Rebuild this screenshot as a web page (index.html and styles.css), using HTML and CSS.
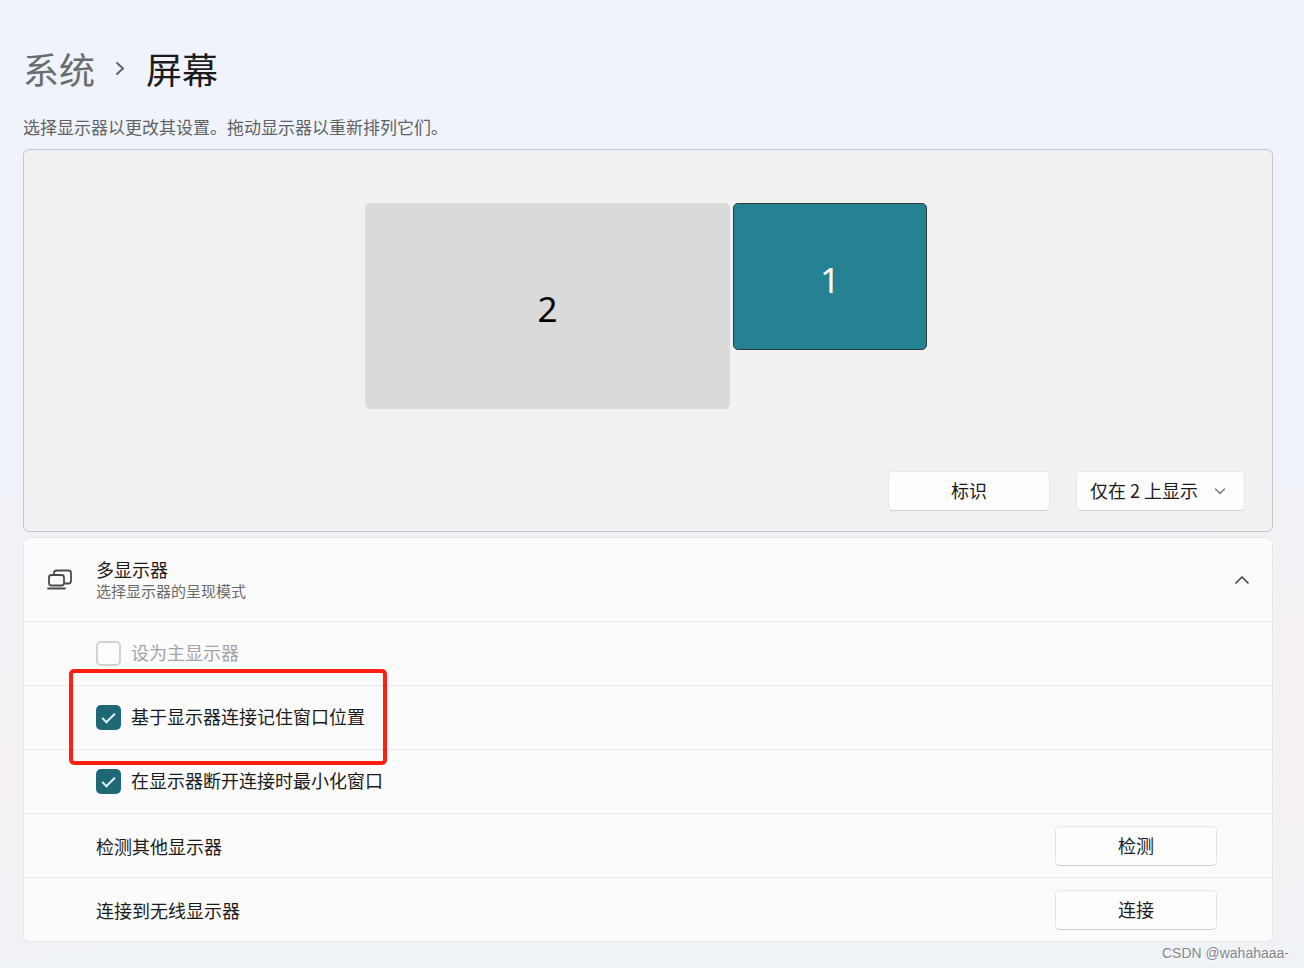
FILE: index.html
```html
<!DOCTYPE html>
<html lang="zh-CN">
<head>
<meta charset="utf-8">
<meta name="viewport" content="width=device-width, initial-scale=1">
<title>屏幕</title>
<link rel="stylesheet" href="styles.css">
</head>
<body>
<main class="page">
  <nav class="crumbs">
    <a class="crumb-parent" href="#">系统</a>
    <svg class="crumb-arrow" width="10" height="16" viewBox="0 0 10 16" aria-hidden="true"><path d="M1 3l6 5.500-6 5.500"/></svg>
    <h1 class="crumb-current">屏幕</h1>
  </nav>
  <p class="intro">选择显示器以更改其设置。拖动显示器以重新排列它们。</p>

  <section class="arrange">
    <div class="monitors">
      <button class="monitor monitor-large" type="button">2</button>
      <button class="monitor monitor-small" type="button">1</button>
    </div>
    <div class="arrange-actions">
      <button class="btn" type="button">标识</button>
      <div class="picker">
        <select class="picker-select" aria-label="显示模式"><option>仅在 2 上显示</option></select>
        <svg class="picker-arrow" width="12" height="8" viewBox="0 0 12 8" aria-hidden="true"><path d="M1.500 2l4.500 4.500 4.500-4.500"/></svg>
      </div>
    </div>
  </section>

  <section class="card">
    <header class="card-head">
      <svg class="card-icon" width="26" height="22" viewBox="0 0 26 22" aria-hidden="true"><rect x="2" y="6" width="15" height="10.500" rx="2.500"/><path d="M7 5.500V4q0-2.500 2.500-2.500h12q2.500 0 2.500 2.500v8q0 2.500-2.500 2.500H18M1 19.500h17"/></svg>
      <div class="card-text">
        <h2 class="card-title">多显示器</h2>
        <p class="card-sub">选择显示器的呈现模式</p>
      </div>
      <button class="collapse" type="button" aria-label="折叠"><svg width="16" height="10" viewBox="0 0 16 10" aria-hidden="true"><path d="M2 8l6-6 6 6"/></svg></button>
    </header>
    <div class="row">
      <label class="option option-off"><input class="check" type="checkbox" disabled><span class="row-text">设为主显示器</span></label>
    </div>
    <div class="row row-marked">
      <label class="option"><input class="check" type="checkbox" checked><span class="row-text">基于显示器连接记住窗口位置</span></label>
    </div>
    <div class="row">
      <label class="option"><input class="check" type="checkbox" checked><span class="row-text">在显示器断开连接时最小化窗口</span></label>
    </div>
    <div class="row">
      <span>检测其他显示器</span>
      <button class="btn" type="button">检测</button>
    </div>
    <div class="row">
      <span>连接到无线显示器</span>
      <button class="btn" type="button">连接</button>
    </div>
  </section>
</main>
<div class="watermark">CSDN @wahahaaa-</div>
</body>
</html>
```
FILE: styles.css
```css
*, *::before, *::after { box-sizing: border-box; }

body {
  position: relative;
  margin: 0;
  min-height: 100vh;
  font: 18px/24px "Noto Sans CJK SC", sans-serif;
  color: #1b1b1b;
  background:
    radial-gradient(ellipse 280px 240px at 100% 74%, #f7f0f2, transparent),
    radial-gradient(ellipse 260px 200px at 0 80%, #f5f1f4, transparent),
    linear-gradient(#eff3fb, #f0f3fa 45%, #f2f2f5 75%, #eff2f7);
}

h1, h2, p { margin: 0; font-weight: 400; }
button, select { font: inherit; color: inherit; }
svg { display: block; fill: none; stroke-linecap: round; stroke-linejoin: round; }

.page { padding: 44px 31px 27px 23px; }

.crumbs {
  display: flex;
  align-items: center;
  height: 48px;
  font-size: 36px;
  line-height: 48px;
}
.crumb-parent { color: #6a6c70; text-decoration: none; }
.crumb-arrow { margin: 0 20px 0 21px; stroke: #626468; stroke-width: 2; }
.crumb-current { font-size: 36px; }
.intro { margin: 23px 0 10px; font-size: 17px; color: #606266; }

.arrange {
  display: flex;
  flex-direction: column;
  justify-content: space-between;
  min-height: 383px;
  padding: 53px 27px 20px;
  border: 1px solid #c4c6ca;
  border-radius: 6px;
  background: #f1f1f1;
}
.monitors {
  display: flex;
  justify-content: center;
  align-items: flex-start;
  gap: 3px;
  padding-right: 4px;
}
.monitor {
  padding: 6px 0 0;
  border: 1px solid #dedede;
  border-radius: 5px;
  font: 35px/48px "Noto Sans", sans-serif;
}
.monitor-large { width: 365px; height: 206px; background: #dadada; color: #000; }
.monitor-small { width: 194px; height: 147px; border-color: #303b3e; background: #258292; color: #fff; }
.arrange-actions { display: flex; justify-content: flex-end; gap: 26px; }

.btn, .picker-select {
  height: 40px;
  padding: 0 0 2px;
  border: 1px solid #e6e6e6;
  border-bottom-color: #cfcfcf;
  border-radius: 5px;
  background: #fdfdfd;
}
.btn { width: 162px; }
.picker { position: relative; }
.picker-select { width: 169px; padding: 0 13px 2px; appearance: none; }
.picker-arrow { position: absolute; right: 19px; top: 16px; stroke: #777; stroke-width: 1.4; pointer-events: none; }

.card {
  margin-top: 5px;
  border: 1px solid #e6e7ea;
  border-radius: 6px;
  background: #fbfbfc;
}
.card-head { display: flex; align-items: center; height: 83px; padding: 0 22px 0 23px; }
.card-icon { stroke: #4a4a4a; stroke-width: 1.8; }
.card-text { flex: 1; margin-left: 23px; }
.card-title { font-size: 18px; line-height: 22px; }
.card-sub { font-size: 15px; line-height: 22px; color: #6a6a6a; }
.collapse { padding: 0; border: 0; background: none; }
.collapse svg { stroke: #4a4a4a; stroke-width: 1.7; }

.row {
  display: flex;
  align-items: center;
  justify-content: space-between;
  height: 64px;
  padding: 0 55px 0 72px;
  border-top: 1px solid #e8e8e9;
}
.option { display: flex; align-items: center; gap: 10px; }
.option-off { color: #a4a4a4; }
.row-text { padding-bottom: 4px; }
.check {
  appearance: none;
  width: 25px;
  height: 25px;
  margin: 0;
  border: 2px solid #d2d2d2;
  border-radius: 5px;
  background: #fdfdfd;
}
.check:checked { display: grid; place-items: center; border: 0; background: #1f6977; }
.check:checked::before {
  content: "";
  width: 13px;
  height: 7px;
  margin-bottom: 2px;
  border: solid #e8f4f5;
  border-width: 0 0 2px 2px;
  transform: rotate(-45deg);
}

/* red callout drawn over the row and its neighbours */
.row-marked { position: relative; }
.row-marked::after {
  content: "";
  position: absolute;
  left: 45px;
  top: -17px;
  width: 318px;
  height: 96px;
  border: 4px solid #ff1f12;
  border-radius: 5px;
  pointer-events: none;
}

.watermark {
  position: absolute;
  right: 15px;
  bottom: 6px;
  font: 14px/20px "Liberation Sans", sans-serif;
  color: #85868a;
  text-shadow: 1px 1px 0 #fff;
}
```
